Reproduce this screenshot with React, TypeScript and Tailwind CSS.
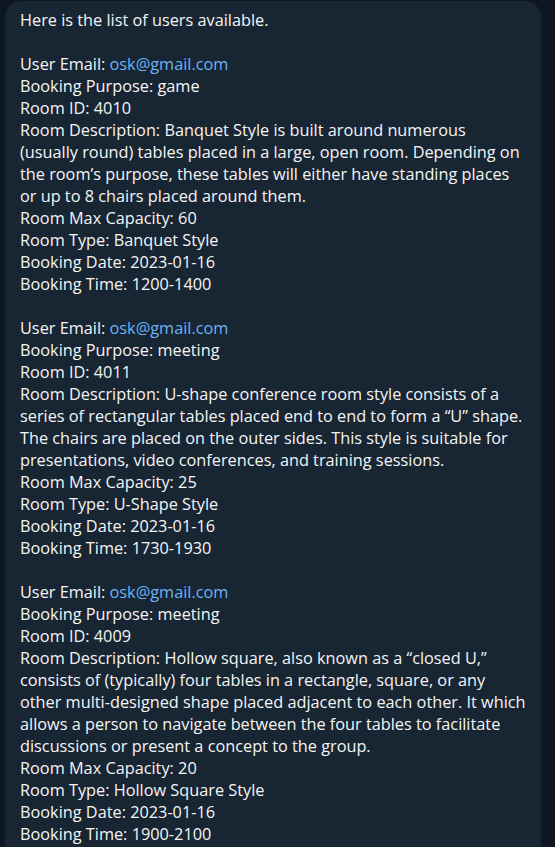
const bookings = [
  {
    email: "osk@gmail.com",
    purpose: "game",
    roomId: "4010",
    description:
      "Banquet Style is built around numerous (usually round) tables placed in a large, open room. Depending on the room’s purpose, these tables will either have standing places or up to 8 chairs placed around them.",
    capacity: 60,
    type: "Banquet Style",
    date: "2023-01-16",
    time: "1200-1400",
  },
  {
    email: "osk@gmail.com",
    purpose: "meeting",
    roomId: "4011",
    description:
      "U-shape conference room style consists of a series of rectangular tables placed end to end to form a “U” shape. The chairs are placed on the outer sides. This style is suitable for presentations, video conferences, and training sessions.",
    capacity: 25,
    type: "U-Shape Style",
    date: "2023-01-16",
    time: "1730-1930",
  },
  {
    email: "osk@gmail.com",
    purpose: "meeting",
    roomId: "4009",
    description:
      "Hollow square, also known as a “closed U,” consists of (typically) four tables in a rectangle, square, or any other multi-designed shape placed adjacent to each other. It which allows a person to navigate between the four tables to facilitate discussions or present a concept to the group.",
    capacity: 20,
    type: "Hollow Square Style",
    date: "2023-01-16",
    time: "1900-2100",
  },
];

export default function App() {
  return (
    <div
      className="min-h-screen bg-[#0e1621] pl-[5px] pr-[14px] pt-px overflow-hidden h-[847px]"
      style={{ fontFamily: '"Open Sans", "Noto Sans", sans-serif' }}
    >
      <div className="rounded-t-[16px] bg-[#182533] pl-[15px] pr-[14px] pt-[8px] pb-4 text-[16.3px] leading-[22px] text-[#f5f5f5]">
        <div>Here is the list of users available.</div>
        {bookings.map((b) => (
          <div key={b.roomId} className="mt-[22px]">
            <div>
              User Email: <a className="text-[#6ab3f3]">{b.email}</a>
            </div>
            <div>Booking Purpose: {b.purpose}</div>
            <div>Room ID: {b.roomId}</div>
            <div>Room Description: {b.description}</div>
            <div>Room Max Capacity: {b.capacity}</div>
            <div>Room Type: {b.type}</div>
            <div>Booking Date: {b.date}</div>
            <div>Booking Time: {b.time}</div>
          </div>
        ))}
      </div>
    </div>
  );
}
